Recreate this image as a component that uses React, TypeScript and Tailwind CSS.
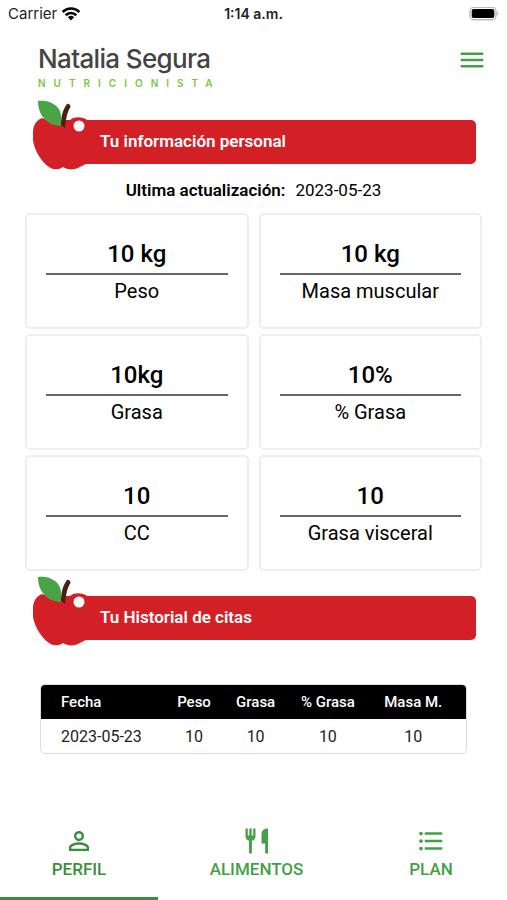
import type { ReactNode } from "react";
import { MdFormatListBulleted, MdMenu, MdPersonOutline } from "react-icons/md";

const metrics = [
  { value: "10 kg", label: "Peso" },
  { value: "10 kg", label: "Masa muscular" },
  { value: "10kg", label: "Grasa" },
  { value: "10%", label: "% Grasa" },
  { value: "10", label: "CC" },
  { value: "10", label: "Grasa visceral" },
];

const columns = [
  { title: "Fecha", className: "w-[28%] pl-5 text-left" },
  { title: "Peso", className: "w-[16%] text-center" },
  { title: "Grasa", className: "w-[13%] text-center" },
  { title: "% Grasa", className: "w-[21%] text-center" },
  { title: "Masa M.", className: "w-[22%] pr-3 text-center" },
];

const visits = [["2023-05-23", "10", "10", "10", "10"]];

function StatusBar() {
  return (
    <div className="grid h-7 grid-cols-3 items-center px-2 text-[15px] text-[#222] font-['Inter','Liberation_Sans',sans-serif]">
      <div className="flex items-center gap-1">
        <span>Carrier</span>
        <svg viewBox="0 0 20 15" className="h-[15px] w-5" aria-hidden="true">
          <g fill="none" stroke="#000" strokeWidth="2.6">
            <path d="M1.6 5 a12 12 0 0 1 16.8 0" />
            <path d="M4.7 8.2 a7.6 7.6 0 0 1 10.6 0" />
          </g>
          <path d="M10 13.4 L6.9 10.2 a4.5 4.5 0 0 1 6.2 0 Z" />
        </svg>
      </div>
      <span className="text-center text-sm font-semibold">1:14 a.m.</span>
      <svg viewBox="0 0 31 15" className="h-[15px] w-[31px] justify-self-end" aria-hidden="true">
        <rect x="2" y="0.2" width="26" height="12.6" rx="4" fill="#fff" stroke="#bbb" strokeWidth="1.4" />
        <rect x="3.7" y="1.9" width="22.6" height="9.2" rx="2" />
        <path d="M29.3 4.3 q2 2.2 0 4.4 Z" fill="#aaa" />
      </svg>
    </div>
  );
}

function Apple() {
  return (
    <svg viewBox="0 0 58 71" className="absolute -top-5 left-0 h-[71px] w-[58px]" aria-hidden="true">
      <path
        d="M9 18 C3 20 0 26 0 32 V41 C2 52 9 62 16 67 C20 70 26 70 30 67 C34 70 41 70 45 68 C49 66 52 64 55 63 H58 V20 H54 C50 17 42 16 37 20 L28 25 Z"
        fill="#d32027"
      />
      <path d="M5 1 C11 0 17 1 22 5 C27 9 29 13 28 26 C16 26 5 17 5 1 Z" fill="#48a444" />
      <path d="M28 25 C28 16 30 9 34 4 C35 3 38 5 37.500 7 C34 12 33 19 32 28 Z" fill="#4b2114" />
      <circle cx="46" cy="26" r="5.5" fill="#fff" />
    </svg>
  );
}

function CutleryIcon() {
  return (
    <svg viewBox="0 0 30 30" className="size-[30px]" fill="currentColor" aria-hidden="true">
      <path d="M3.500 2.500 H5.800 V9.500 H7.300 V2.500 H9.700 V9.500 H11.200 V2.500 H13.500 V10 C13.500 12.500 12 14.300 9.900 14.700 V27.500 H7.100 V14.700 C5 14.300 3.500 12.500 3.500 10 Z" />
      <path d="M26 2.500 V27.500 H23.200 V17.500 H19.500 V8 C19.500 4.500 22 2.500 26 2.500 Z" />
    </svg>
  );
}

function Banner({ children }: { children: ReactNode }) {
  return (
    <div className="relative ml-[33px] mr-[31px]">
      <h2 className="ml-7 flex h-11 items-center rounded-[5px] bg-[#d32027] pb-px pl-[39px] text-[17px] font-semibold text-white">
        {children}
      </h2>
      <Apple />
    </div>
  );
}

export default function App() {
  return (
    <div className="flex min-h-screen flex-col bg-white text-black font-['Roboto','Liberation_Sans',sans-serif]">
      <StatusBar />
      <header className="flex h-[92px] items-start justify-between pl-[38px] pr-5 pt-4">
        <div>
          <div className="text-[26px] leading-[30px] font-medium tracking-tight text-[#444] font-['Inter','Lato',sans-serif]">
            Natalia Segura
          </div>
          <div className="text-[10px] leading-[18px] font-semibold tracking-[0.8em] text-[#78c83c] font-['Inter','Lato',sans-serif]">
            NUTRICIONISTA
          </div>
        </div>
        <button type="button" aria-label="Menú" className="pt-px text-[#43a047]">
          <MdMenu size={30} />
        </button>
      </header>

      <main>
        <Banner>Tu información personal</Banner>
        <p className="mt-[14px] text-center text-[17px] leading-6">
          <strong className="mr-2.5 font-semibold">Ultima actualización:</strong>
          2023-05-23
        </p>
        <div className="mx-[25px] mt-[11px] grid grid-cols-2 gap-x-2.5 gap-y-[5px]">
          {metrics.map(({ value, label }) => (
            <section key={label} className="h-[116px] rounded-[5px] border-2 border-[#eee] px-[19px] pt-6 text-center">
              <div className="border-b-2 border-[#666] pb-1 text-2xl leading-[30px] font-medium">{value}</div>
              <div className="mt-0.5 text-xl leading-7">{label}</div>
            </section>
          ))}
        </div>
        <div className="mt-[25px]">
          <Banner>Tu Historial de citas</Banner>
        </div>
        <div className="mx-10 mt-11 overflow-hidden rounded-[5px] border border-[#ddd]">
          <table className="w-full table-fixed border-collapse">
            <thead className="bg-black text-[15px] text-white">
              <tr className="h-[34px]">
                {columns.map(({ title, className }) => (
                  <th key={title} scope="col" className={`${className} font-medium`}>
                    {title}
                  </th>
                ))}
              </tr>
            </thead>
            <tbody className="text-base text-[#222]">
              {visits.map((visit) => (
                <tr key={visit[0]} className="h-[34px]">
                  {visit.map((cell, i) => (
                    <td key={columns[i].title} className={`${columns[i].className} pt-0.5`}>
                      {cell}
                    </td>
                  ))}
                </tr>
              ))}
            </tbody>
          </table>
        </div>
      </main>

      <nav className="mt-auto grid h-[90px] grid-cols-[158fr_197fr_152fr] text-[17px] font-medium text-[#43a047]">
        <button type="button" aria-current="page" className="flex flex-col items-center border-b-3 border-[#388e3c] pt-4 text-[#388e3c]">
          <MdPersonOutline size={30} />
          <span className="leading-[26px]">PERFIL</span>
        </button>
        <button type="button" className="flex flex-col items-center border-b-3 border-transparent pt-4">
          <CutleryIcon />
          <span className="leading-[26px]">ALIMENTOS</span>
        </button>
        <button type="button" className="flex flex-col items-center border-b-3 border-transparent pt-4">
          <MdFormatListBulleted size={30} />
          <span className="leading-[26px]">PLAN</span>
        </button>
      </nav>
    </div>
  );
}
